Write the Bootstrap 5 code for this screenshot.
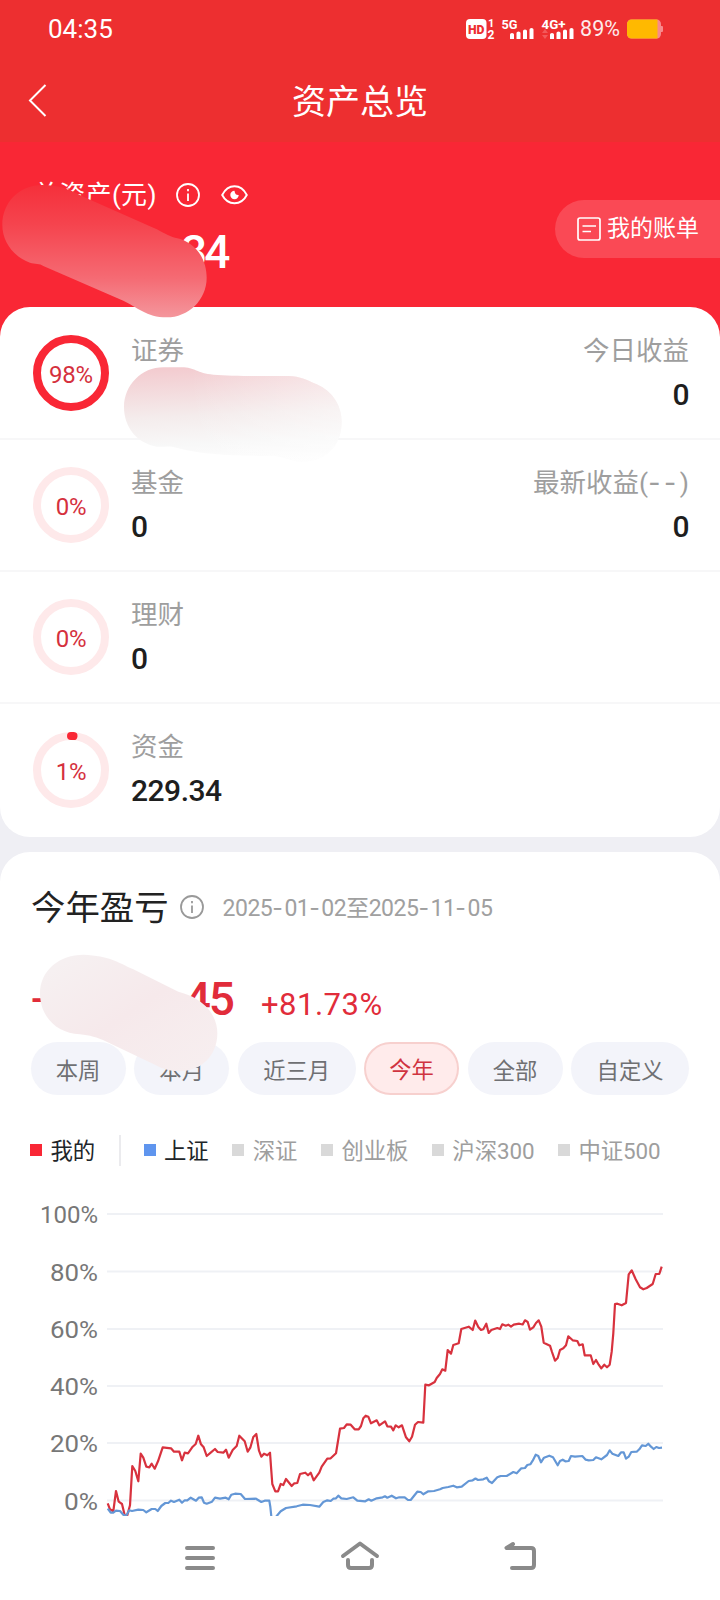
<!DOCTYPE html>
<html lang="zh-CN">
<head>
<meta charset="utf-8">
<meta name="viewport" content="width=device-width, initial-scale=1">
<title>资产总览</title>
<link href="https://cdn.jsdelivr.net/npm/bootstrap@5.3.0/dist/css/bootstrap.min.css" rel="stylesheet">
<style>
  body { font-family: Roboto, "Noto Sans CJK SC", sans-serif; width: 720px; height: 1600px; overflow: hidden; background: #efeff4; color: #222; line-height: 1; }
  svg { display: block; flex: none; }
  .topbar { background: #ed2f30; height: 142px; }
  .status { height: 56px; padding: 1px 56px 0 48px; font-size: 26px; }
  .battery-text { font-size: 21.5px; opacity: .9; }
  .titlebar { height: 86px; padding-top: 6px; }
  .titlebar h1 { font-size: 34px; line-height: 40px; }
  .back { left: 26px; top: 25px; }
  .hero { background: #f92735; height: 198px; }
  .hero-label { font-size: 26px; line-height: 34px; padding: 36px 0 0 33px; letter-spacing: .3px; }
  .hero-sum { font-size: 46px; line-height: 50px; font-weight: 500; padding: 15px 0 0 181px; letter-spacing: -3px; }
  .bill { right: 0; top: 58px; height: 58px; width: 165px; padding: 0 0 1px 22px; border-radius: 29px 0 0 29px; background: rgba(255,255,255,.16); font-size: 23px; }
  .panel { border-radius: 30px; }
  .assets { margin-top: -33px; height: 530px; padding-top: 1px; }
  .asset { height: 132px; padding: 0 31px 0 33px; border-bottom: 2px solid #f7f7f8; }
  .asset:last-child { border-bottom: 0; height: 131.7px; }
  .asset .label-t { font-size: 26.5px; line-height: 34px; color: #9e9e9e; }
  .asset .value-t { font-size: 30px; line-height: 34px; margin-top: 10px; margin-bottom: 1px; font-weight: 500; letter-spacing: -.5px; color: #1e1e1e; }
  .ring { width: 76px; height: 76px; }
  .ring span { font-size: 24px; color: #d5303d; padding-top: 4px; letter-spacing: -.2px; }
  .dash { font-family: Inter, sans-serif; letter-spacing: 1.5px; }
  .dash.wide { letter-spacing: 3.6px; }
  .profit { margin-top: 15px; height: 748px; border-radius: 30px 30px 0 0; }
  .p-head { height: 110px; padding: 0 0 0 31px; }
  .p-head h2 { font-size: 34.4px; line-height: 40px; padding-top: 1px; }
  .p-date { font-size: 23px; color: #a0a0a0; letter-spacing: -.5px; padding-top: 3px; }
  .p-sum { height: 80px; padding: 10px 0 0 31px; color: #e12c3a; }
  .p-big { font-size: 46px; font-weight: 500; width: 202px; letter-spacing: -2px; line-height: 54px; }
  .p-minus { font-size: 40px; transform: translateY(-2px); }
  .p-rate { font-size: 31px; margin-left: 28px; letter-spacing: .5px; }
  .chips { padding: 0 31px 0 30.5px; gap: 8.4px; }
  .chip { height: 53px; width: 95.4px; border-radius: 27px; background: #f3f4fa; color: #6f7073; font-size: 22.3px; padding-top: 5px; }
  .chip.wide { width: 118.2px; }
  .chip.on { background: #ffebeb; border: 2px solid #f7d0ce; color: #d0333f; padding-top: 3px; }
  .legend { height: 34px; margin-top: 38px; padding-left: 30px; font-size: 22.4px; color: #9e9e9e; }
  .legend i { width: 12px; height: 12px; background: #d9d9d9; margin-right: 8.4px; position: relative; top: -1px; }
  .legend .item { margin-right: 23.7px; letter-spacing: -.1px; padding-top: 2px; }
  .legend .sep { width: 2px; height: 31px; background: #ebebee; margin-right: 23px; }
  .axis { font-size: 24px; fill: #777; }
  .masks { z-index: 5; pointer-events: none; }
</style>
</head>
<body class="position-relative">
<header class="topbar text-white">
  <div class="status d-flex justify-content-between align-items-center">
    <span>04:35</span>
    <div class="d-flex align-items-center">
      <svg width="110" height="30" viewBox="464 13 110 30" fill="#fff" font-family="Roboto, sans-serif" font-weight="700">
        <rect x="465" y="18" width="20.500" height="20" rx="4"/>
        <text x="467" y="32.500" font-size="12" fill="#ed2f30" textLength="16.500" lengthAdjust="spacingAndGlyphs" font-weight="900">HD</text>
        <text x="487" y="26" font-size="11">1</text><text x="486.500" y="38" font-size="12">2</text>
        <text x="500.500" y="27.500" font-size="13.500" textLength="16" lengthAdjust="spacingAndGlyphs">5G</text>
        <path d="M509 33.500q0-1.500 2-1.500t2 1.500V38h-4zM515.500 32q0-1.500 2-1.500t2 1.500v6h-4zM522 30q0-1.500 2-1.500t2 1.500v8h-4zM528.500 28.500q0-1.500 2-1.500t2 1.500V38h-4z"/>
        <text x="540.500" y="27.500" font-size="13.500" textLength="24" lengthAdjust="spacingAndGlyphs">4G+</text>
        <path d="M549 33.500q0-1.500 2-1.500t2 1.500V38h-4zM555.500 32q0-1.500 2-1.500t2 1.500v6h-4zM562 30q0-1.500 2-1.500t2 1.500v8h-4zM568.500 28.500q0-1.500 2-1.500t2 1.500V38h-4z"/>
        <path d="M541 32h6l-3-4zM541 34h6l-3 4z" fill="#f25a5b"/>
      </svg>
      <span class="battery-text" style="margin-left:5px">89%</span>
      <svg width="37" height="20" viewBox="0 0 37 20" style="margin-left:7px"><rect width="34" height="19" y=".5" rx="4.500" fill="#f78a8c"/><rect x="33" y="7" width="3" height="6" rx="1" fill="#f78a8c"/><path d="M4.500.5H30.500v19H4.500A4.500 4.500 0 0 1 0 15V5A4.500 4.500 0 0 1 4.500.5z" fill="#ffb900"/></svg>
    </div>
  </div>
  <div class="titlebar position-relative d-flex align-items-center justify-content-center">
    <svg class="back position-absolute" width="22" height="38" viewBox="0 0 22 38" fill="none" stroke="#fff" stroke-width="2"><path d="M19.500 4 4 19.500 19.500 35"/></svg>
    <h1 class="m-0 fw-normal">资产总览</h1>
  </div>
</header>

<section class="hero text-white position-relative">
  <div class="hero-label d-flex align-items-center">
    <span>总资产(元)</span>
    <svg width="24" height="24" viewBox="0 0 24 24" fill="none" stroke="#fff" stroke-width="1.800" style="margin-left:19px"><circle cx="12" cy="12" r="11"/><path d="M12 10.500v7.500M12 6v2.200"/></svg>
    <svg width="27" height="20" viewBox="0 0 27 20" fill="none" stroke="#fff" stroke-width="1.900" style="margin-left:21px"><path d="M1.200 10C4 4.500 8.500 1.300 13.500 1.300S23 4.500 25.800 10C23 15.500 18.500 18.200 13.500 18.200S4 15.500 1.200 10z"/><path d="M13.500 5.800a4.200 4.200 0 1 0 4.200 4.200q-3.800.4-4.200-4.200z" fill="#fff" stroke="none"/></svg>
  </div>
  <div class="hero-sum">34</div>
  <div class="bill position-absolute d-flex align-items-center">
    <svg width="24" height="24" viewBox="0 0 24 24" fill="none" stroke="#fff" stroke-width="1.700"><rect x="1" y="1" width="22" height="22" rx="2"/><path d="M5.500 9H19M5.500 14.500h8.500"/></svg>
    <span style="margin-left:6px">我的账单</span>
  </div>
</section>

<main>
  <section class="panel assets bg-white position-relative">
    <div class="asset d-flex align-items-center">
      <div class="ring position-relative d-flex align-items-center justify-content-center"><svg class="position-absolute top-0 start-0" width="76" height="76" fill="none" stroke="#f92735" stroke-width="8"><circle cx="38" cy="38" r="34"/></svg><span>98%</span></div>
      <div style="margin-left:22px"><div class="label-t">证券</div><div class="value-t">&nbsp;</div></div>
      <div class="ms-auto text-end"><div class="label-t">今日收益</div><div class="value-t">0</div></div>
    </div>
    <div class="asset d-flex align-items-center">
      <div class="ring position-relative d-flex align-items-center justify-content-center"><svg class="position-absolute top-0 start-0" width="76" height="76" fill="none" stroke="#fee9ea" stroke-width="8"><circle cx="38" cy="38" r="34"/></svg><span>0%</span></div>
      <div style="margin-left:22px"><div class="label-t">基金</div><div class="value-t">0</div></div>
      <div class="ms-auto text-end"><div class="label-t">最新收益(<span class="dash wide">--</span>)</div><div class="value-t">0</div></div>
    </div>
    <div class="asset d-flex align-items-center">
      <div class="ring position-relative d-flex align-items-center justify-content-center"><svg class="position-absolute top-0 start-0" width="76" height="76" fill="none" stroke="#fee9ea" stroke-width="8"><circle cx="38" cy="38" r="34"/></svg><span>0%</span></div>
      <div style="margin-left:22px"><div class="label-t">理财</div><div class="value-t">0</div></div>
    </div>
    <div class="asset d-flex align-items-center">
      <div class="ring position-relative d-flex align-items-center justify-content-center"><svg class="position-absolute top-0 start-0" width="76" height="76" fill="none" stroke="#fee9ea" stroke-width="8"><circle cx="38" cy="38" r="34"/><path d="M38 4q1.500 0 2.500.1" stroke="#f92735" stroke-linecap="round"/></svg><span>1%</span></div>
      <div style="margin-left:22px"><div class="label-t">资金</div><div class="value-t">229.34</div></div>
    </div>
  </section>

  <section class="profit bg-white">
    <div class="p-head d-flex align-items-center">
      <h2 class="m-0 fw-normal">今年盈亏</h2>
      <svg width="24" height="24" viewBox="0 0 24 24" fill="none" stroke="#999" stroke-width="1.800" style="margin-left:11px"><circle cx="12" cy="12" r="11"/><path d="M12 10.500v7.500M12 6v2.200"/></svg>
      <span class="p-date" style="margin-left:19px">2025<span class="dash">-</span>01<span class="dash">-</span>02至2025<span class="dash">-</span>11<span class="dash">-</span>05</span>
    </div>
    <div class="p-sum d-flex align-items-baseline">
      <div class="p-big d-flex justify-content-between align-items-baseline"><span class="p-minus">-</span><span>45</span></div>
      <span class="p-rate">+81.73%</span>
    </div>
    <div class="chips d-flex">
      <div class="chip d-flex align-items-center justify-content-center">本周</div>
      <div class="chip d-flex align-items-center justify-content-center">本月</div>
      <div class="chip wide d-flex align-items-center justify-content-center">近三月</div>
      <div class="chip on d-flex align-items-center justify-content-center">今年</div>
      <div class="chip d-flex align-items-center justify-content-center">全部</div>
      <div class="chip wide d-flex align-items-center justify-content-center">自定义</div>
    </div>
    <div class="legend d-flex align-items-center text-nowrap">
      <span class="item d-flex align-items-center text-dark"><i style="background:#f92735"></i>我的</span>
      <span class="sep"></span>
      <span class="item d-flex align-items-center text-dark"><i style="background:#5f95ee"></i>上证</span>
      <span class="item d-flex align-items-center"><i></i>深证</span>
      <span class="item d-flex align-items-center"><i></i>创业板</span>
      <span class="item d-flex align-items-center"><i></i>沪深300</span>
      <span class="item d-flex align-items-center"><i></i>中证500</span>
    </div>
    <svg width="720" height="348.500" viewBox="0 1167 720 348.500" fill="none">
      <path d="M107 1214H663M107 1271.500H663M107 1329H663M107 1386H663M107 1443H663M107 1500.500H663" stroke="#eff1f5" stroke-width="2"/>
      <g class="axis" text-anchor="end"><text x="98" y="1223">100%</text><text x="98" y="1280.500" textLength="48" lengthAdjust="spacingAndGlyphs">80%</text><text x="98" y="1337.500" textLength="48" lengthAdjust="spacingAndGlyphs">60%</text><text x="98" y="1395" textLength="48" lengthAdjust="spacingAndGlyphs">40%</text><text x="98" y="1452" textLength="48" lengthAdjust="spacingAndGlyphs">20%</text><text x="98" y="1509.500" textLength="34" lengthAdjust="spacingAndGlyphs">0%</text></g>
      <g stroke-width="2.200" stroke-linejoin="round">
      <polyline stroke="#d8323e" points="107.7,1503.3 110,1509.3 113.3,1511.3 116,1491 118.7,1501.7 122,1504 124.7,1515.3 127.3,1515.3 130,1505.3 132.3,1466 135.3,1471 138.3,1481.3 140.7,1453.7 143.3,1457.7 146.3,1466.7 149.3,1467.3 151.7,1463.7 154.7,1468.7 158,1461.3 162.7,1447.3 171,1448.3 174,1451.7 179.3,1451.7 182,1460.3 184.7,1452.7 188,1453.3 192.7,1446.7 195.7,1444 198.3,1435.7 201,1444.3 203.7,1447.3 206.7,1456 210.7,1452.7 215,1449 217.7,1452 223.3,1452.7 226,1449.7 228.7,1457.7 232.7,1450 236.7,1446 239.3,1435.7 244.7,1441.3 247.7,1451.7 250.3,1447.7 253.3,1437 256.3,1434 259,1450.7 261.3,1456.7 264,1453.7 267.3,1455.3 270,1452.7 271,1466.7 272.3,1484 275.3,1491.3 278,1491.3 280.7,1484 283.3,1485 286,1479 291.7,1486 294.3,1483.3 297.3,1483 300,1474 305.3,1472.7 308,1475.3 310.7,1472.7 313.7,1480.3 319.3,1472.7 321.7,1466.7 327.3,1458.7 330.7,1458.3 336,1453.3 340,1428.7 344,1428 346.7,1424.3 350.7,1424.7 354.7,1429.3 358.7,1429.3 361,1426 363.3,1418.3 365.7,1415.7 368.3,1416.7 371,1423.3 376.7,1420.3 379.3,1425.3 385,1421.3 387.3,1426.3 391,1426.7 393.3,1430.3 395.7,1425.3 398.7,1427.3 402,1425.3 406,1437.3 409.3,1441.3 412,1436.7 415,1424.7 418,1422 423.3,1422.7 425.3,1384.7 429,1385.3 434.7,1382 436.7,1378 440,1374 442.3,1369.3 445.3,1370.7 447.7,1350 451,1353.7 453.3,1345 458.7,1343.3 461.3,1329 468.7,1326.7 472.7,1330 475.2,1320.5 478.3,1327 481,1330 483.3,1329.3 486.3,1323.7 488.7,1333 491.3,1330 497.3,1328 500,1329 502.3,1324.3 505.7,1325.7 508.3,1324.7 511,1326.7 513.7,1324.7 519.3,1323.7 522.7,1324.5 525,1320.3 527.7,1322 530,1329.7 533.3,1327.3 536,1323 538.7,1320.3 541.3,1326.7 543.7,1342.7 550,1345.7 552,1352 555,1360.7 557.7,1358 560,1350 563.3,1348.3 566,1345.3 568.3,1336.3 572.7,1340.3 577.3,1341 579.3,1345.3 582.7,1344.3 584.7,1355.3 590.7,1355.3 593.3,1364 596,1360 598.7,1364.7 601.3,1368.3 604.3,1364.7 607,1367.3 609.7,1364.7 611.7,1351.7 613.3,1333.3 615,1304 617.3,1303.7 621.7,1305.3 626,1303 628.7,1274.3 631.7,1270.3 635.7,1279.3 640,1287.3 643.3,1289.3 646.7,1288 652.7,1284 655.7,1274 659.3,1274 661.7,1266.7"/>
      <polyline stroke="#6497d6" points="107.7,1508.7 110.7,1512.7 113.3,1512.7 116,1510.7 120,1511 123.3,1514.7 126,1516 129.3,1510.3 132,1511 138.3,1509.7 143.3,1510 146.3,1512.3 151.7,1509 155.3,1509 157.7,1511 161.3,1506 165.3,1503 168.3,1503 171,1500.7 174,1502 179.3,1499.7 182,1502.7 184.7,1500.3 187.3,1500.3 190.7,1497.7 196,1500.7 198.7,1497.7 201.7,1497.3 204,1502.7 206.7,1503.7 212,1501.7 215,1497.7 220,1498.7 225.7,1497.7 228.7,1499.3 231.3,1494.7 235,1493.7 240.7,1494 245,1499 256,1498.7 261.3,1502 264.7,1500.7 269.3,1500.7 270.3,1506.7 271.7,1520 275,1518 280.7,1511.3 286,1508 296.7,1506.3 302.7,1504.7 310,1505 319.3,1506.7 323.3,1502 327.3,1500.3 330.7,1501 333.3,1498.7 336,1498.3 338.3,1495.7 341.3,1498.3 346.7,1499 353.3,1497.3 357.3,1500.7 365.3,1501.3 368.7,1499.3 371.3,1500.7 376.7,1498.3 382.7,1497.3 385,1496.3 387.3,1497.7 391.7,1495.7 396,1498.3 399.3,1497.3 404.7,1497.3 408,1500 410.7,1500 413.3,1496.7 417.3,1491.7 420.7,1492 423.3,1494.3 428.3,1491.3 434,1491 440,1489.3 442.7,1488 448.3,1487 453.3,1485.7 456.7,1487.3 461.7,1486.7 468.7,1481 472.7,1480.3 475.5,1478.5 478,1480 483.3,1479.3 486.7,1477.7 489,1481.3 492,1483 497.3,1477.3 500.7,1476 506.7,1476 513.3,1472 516.7,1473.3 521.3,1468.3 525,1468 527.3,1465 530.3,1464.3 532.7,1460.7 535.7,1454.7 538.3,1456 541,1462.3 544,1457.7 549.3,1455.7 553,1457.3 557.7,1465.3 560,1461 562.7,1459.7 565.3,1461.3 568.7,1461 571,1456 575,1456.7 582.3,1456 585.7,1459.7 588.7,1460.3 593.3,1460 596,1457.3 601.3,1459.3 607,1455 609.7,1450.3 612.3,1453.7 618.3,1456 621,1452.3 623.7,1452.3 626,1458.7 628.7,1456.7 631.3,1452 636.7,1451.7 639.3,1449.3 642,1445.3 645.7,1446 648.3,1443.7 651,1446.7 653.7,1449 656.3,1447 659,1448 662,1447.7"/>
      </g>
    </svg>
    <nav class="d-flex justify-content-center" aria-label="系统导航">
      <svg width="400" height="84" viewBox="160 1516 400 84" fill="none" stroke="#8a8a8a" stroke-width="4" stroke-linecap="round" stroke-linejoin="round">
        <path d="M187 1548h26M187 1558h26M187 1568h26"/>
        <path d="M343 1556 360 1543.500 377 1556M348 1560v5q0 3 3 3h18q3 0 3-3v-5"/>
        <path d="M513 1544 506.500 1548H531q3 0 3 3v14q0 3-3 3H512"/>
      </svg>
    </nav>
  </section>
</main>

<!-- strokes that hide private amounts -->
<svg class="masks position-absolute top-0 start-0" width="360" height="1100" viewBox="0 0 360 1100">
  <defs>
    <linearGradient id="m1" x1="0" y1="0" x2="0" y2="1"><stop offset="0" stop-color="#f5303b"/><stop offset=".3" stop-color="#f5444e"/><stop offset=".7" stop-color="#f56a73"/><stop offset="1" stop-color="#f4969c"/></linearGradient>
    <linearGradient id="m2" x1=".4" y1="0" x2=".5" y2="1"><stop offset="0" stop-color="#f3ccd0"/><stop offset=".5" stop-color="#f4ecec"/><stop offset=".8" stop-color="#f8f8f8"/><stop offset="1" stop-color="#fdfdfd"/></linearGradient>
    <linearGradient id="m2fade" x1="0" y1="0" x2="1" y2="0"><stop offset=".3" stop-color="#fff" stop-opacity="0"/><stop offset="1" stop-color="#fff" stop-opacity=".4"/></linearGradient>
    <linearGradient id="m3" x1="0" y1="0" x2="1" y2="1"><stop offset=".1" stop-color="#f6f0f1"/><stop offset=".5" stop-color="#f6e9eb"/><stop offset="1" stop-color="#f7eff0"/></linearGradient>
    <path id="stroke2" d="M490 622L545 622C585 622 590 640 640 644C690 648 760 648 865 648C900 648 925 662 950 673C1000 695 1025 740 1025 785C1025 860 975 905 905 905C870 905 850 888 820 888L700 886C620 883 560 872 520 861C500 858 490 862 470 860C410 850 372 800 372 742C372 675 425 622 490 622Z"/>
  </defs>
  <g transform="translate(0 160) scale(.33333)">
    <path fill="url(#m1)" d="M127 75C180 75 215 92 250 110L460 203C490 216 505 228 525 233C590 245 620 300 620 353C620 420 565 472 500 472C440 472 410 440 370 422L130 318C120 310 105 312 90 308C40 290 7 245 7 195C7 125 60 75 127 75Z"/>
    <use href="#stroke2" fill="url(#m2)"/>
    <use href="#stroke2" fill="url(#m2fade)"/>
  </g>
  <g transform="translate(0 860) scale(.33333)">
    <path fill="url(#m3)" d="M250 284C330 288 350 305 400 328L535 395C570 405 590 415 605 428C640 455 652 490 652 520C652 590 600 634 540 634C490 634 470 615 430 598L320 545C290 532 270 526 240 523C170 520 120 470 120 400C120 330 180 284 250 284Z"/>
  </g>
</svg>
<script src="https://cdn.jsdelivr.net/npm/bootstrap@5.3.0/dist/js/bootstrap.bundle.min.js"></script>
</body>
</html>
